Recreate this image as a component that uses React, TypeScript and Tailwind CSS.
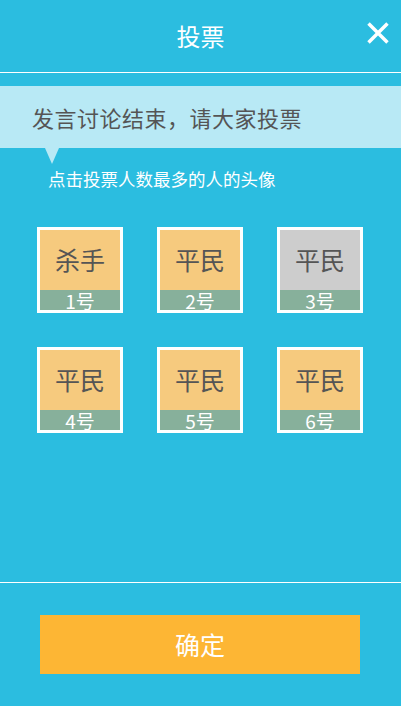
import React from 'react';

const players = [
  { role: '杀手', no: '1号', dead: false },
  { role: '平民', no: '2号', dead: false },
  { role: '平民', no: '3号', dead: true },
  { role: '平民', no: '4号', dead: false },
  { role: '平民', no: '5号', dead: false },
  { role: '平民', no: '6号', dead: false },
];

const App = () => {
  return (
    <div
      className="w-[401px] h-[706px] bg-[#2bbde0] flex flex-col overflow-hidden"
      style={{ fontFamily: '"Noto Sans CJK SC", "Noto Sans", sans-serif' }}
    >
      {/* Header */}
      <div className="h-[73px] relative flex items-center justify-center border-b border-white">
        <h1 className="text-[24px] text-white">投票</h1>
        <svg className="absolute right-[12px] top-[22px] w-[22px] h-[22px]" viewBox="0 0 24 24">
          <path d="M3 3 L21 21 M21 3 L3 21" stroke="#fff" strokeWidth="3.8" strokeLinecap="square" />
        </svg>
      </div>

      {/* Banner */}
      <div className="mt-[13px] h-[62px] bg-[#b8e9f5] flex items-center pl-[32px] relative">
        <p className="text-[22px] text-[#555] tracking-[0.5px]">发言讨论结束，请大家投票</p>
        <div className="absolute left-[45px] top-[62px] w-0 h-0 border-l-[7px] border-r-[7px] border-t-[16px] border-l-transparent border-r-transparent border-t-[#b8e9f5]" />
      </div>
      <p className="mt-[19px] pl-[48px] text-[17.5px] text-white leading-[24px]">点击投票人数最多的人的头像</p>

      {/* Players */}
      <div className="mt-[36px] pl-[37px] grid grid-cols-[86px_86px_86px] gap-x-[34px] gap-y-[34px]">
        {players.map((p, i) => (
          <div key={i} className="w-[86px] h-[86px] border-[3px] border-white flex flex-col">
            <div
              className={`flex-1 flex items-center justify-center text-[25px] text-[#555] ${
                p.dead ? 'bg-[#cdcdcd]' : 'bg-[#f6ca7e]'
              }`}
            >
              {p.role}
            </div>
            <div className="h-[20px] bg-[#87b09b] flex items-center justify-center text-[19px] leading-none text-white">
              {p.no}
            </div>
          </div>
        ))}
      </div>

      <div className="flex-1" />

      {/* Footer */}
      <div className="h-[124px] border-t border-white flex pl-[40px] pt-[32px]">
        <button className="w-[320px] h-[59px] bg-[#fdb634] text-white text-[25px]">确定</button>
      </div>
    </div>
  );
};

export default App;
